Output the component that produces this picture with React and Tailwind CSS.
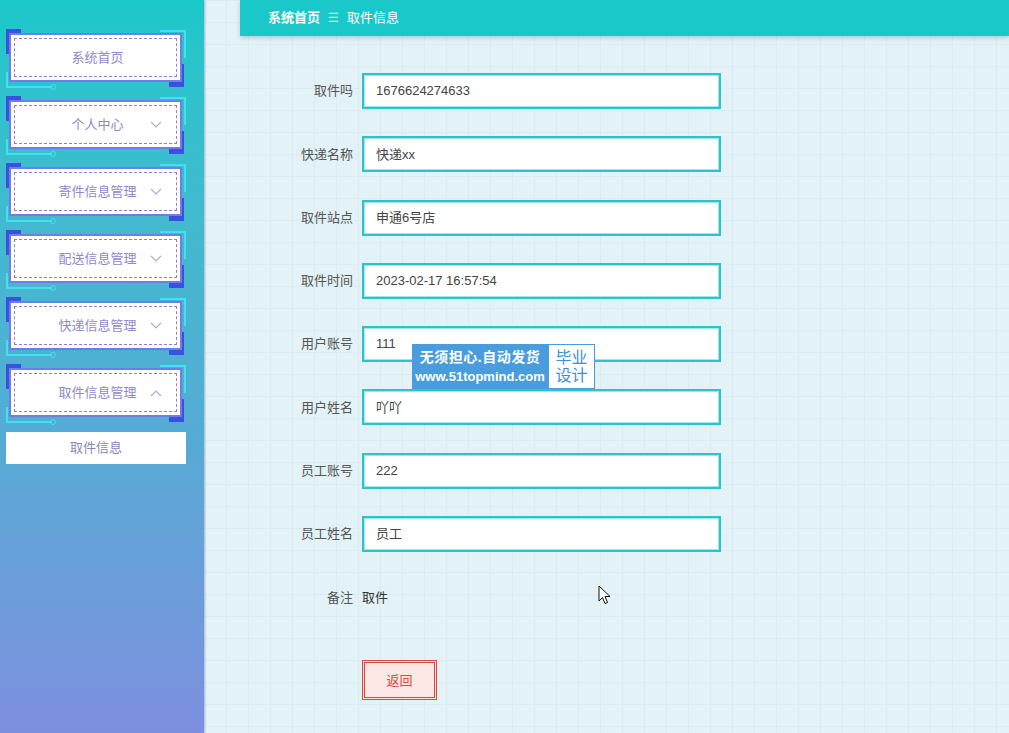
import React from "react";

const font = { fontFamily: '"Liberation Sans", "Noto Sans CJK SC", sans-serif' };

function Chevron({ up }) {
  return (
    <svg width="12" height="8" viewBox="0 0 12 8" className="absolute right-[14px] top-1/2 -translate-y-1/2">
      <path d={up ? "M1 7 L6 2 L11 7" : "M1 1 L6 6 L11 1"} fill="none" stroke="#b0aadb" strokeWidth="1.2" />
    </svg>
  );
}

function MenuItem({ label, arrow }) {
  return (
    <div className="relative h-[67px] pl-[9px] pt-[5px]">
      <div className="absolute left-[6px] top-[1px] w-[15px] h-[25px] bg-[#3b4fe0]" />
      <div className="absolute left-[169px] top-[36px] w-[15px] h-[23px] bg-[#3b4fe0]" />
      <div className="absolute left-[160px] top-[2px] w-[26px] h-[28px] border-t-2 border-r-2 border-[#3fe3f0]" />
      <div className="absolute left-[6px] top-[44px] w-[46px] h-[16px] border-l-2 border-b-2 border-[#3fe3f0]" />
      <div className="absolute left-[50px] top-[56px] w-[6px] h-[6px] rounded-full border border-[#3fe3f0]" />
      <div className="relative w-[173px] h-[49px] bg-white border-2 border-[#6f7ee6] p-[3px]">
        <div className="relative h-full border border-dashed border-[#8f7fcc] flex items-center justify-center">
          <span className="text-[13px] text-[#9088cc] ml-[4px]">{label}</span>
          {arrow && <Chevron up={arrow === "up"} />}
        </div>
      </div>
    </div>
  );
}

function Row({ label, value }) {
  return (
    <div className="flex items-center h-[36px]">
      <div className="w-[73px] text-right text-[13px] text-[#555]">{label}</div>
      <div className="ml-[9px] w-[359px] h-[36px] bg-white border-2 border-[#2cc4ca] shadow-[inset_0_0_0_1px_#9fe6ea] flex items-center pl-[12px] text-[13px] text-[#444]">
        {value}
      </div>
    </div>
  );
}

export default function App() {
  const rows = [
    ["取件吗", "1676624274633"],
    ["快递名称", "快递xx"],
    ["取件站点", "申通6号店"],
    ["取件时间", "2023-02-17 16:57:54"],
    ["用户账号", "111"],
    ["用户姓名", "吖吖"],
    ["员工账号", "222"],
    ["员工姓名", "员工"],
  ];
  return (
    <div style={font} className="relative flex w-[1009px] h-[733px] overflow-hidden">
      <div className="w-[204px] h-full shrink-0 bg-gradient-to-b from-[#1bc8c9] via-[#55abd5] via-60% to-[#7d8fdf] pt-[28px] shadow-[1px_0_2px_rgba(60,80,120,0.35)] z-10">
        <MenuItem label="系统首页" />
        <MenuItem label="个人中心" arrow="down" />
        <MenuItem label="寄件信息管理" arrow="down" />
        <MenuItem label="配送信息管理" arrow="down" />
        <MenuItem label="快递信息管理" arrow="down" />
        <MenuItem label="取件信息管理" arrow="up" />
        <div className="ml-[6px] mt-[2px] w-[180px] h-[32px] bg-white flex items-center justify-center text-[13px] text-[#8a86b8]">
          取件信息
        </div>
      </div>

      <div className="flex-1 h-full bg-[#e2f2f6] bg-[linear-gradient(to_right,#d8ecf1_1px,transparent_1px),linear-gradient(to_bottom,#d8ecf1_1px,transparent_1px)] bg-[size:22px_22px]">
        <div className="ml-[36px] h-[36px] bg-[#1bc8c9] shadow-[0_2px_4px_rgba(80,120,140,0.3)] flex items-center pl-[28px] text-[13px] text-white">
          <span className="font-bold">系统首页</span>
          <span className="mx-[8px] text-[#cdf3f4] text-[12px]">☰</span>
          <span>取件信息</span>
        </div>
        <div className="pl-[76px] pt-[37px] flex flex-col gap-[27.3px]">
          {rows.map(([l, v]) => (
            <Row key={l} label={l} value={v} />
          ))}
          <div className="flex items-center h-[36px]">
            <div className="w-[73px] text-right text-[13px] text-[#555]">备注</div>
            <div className="ml-[9px] text-[13px] text-[#333]">取件</div>
          </div>
        </div>
        <div className="pl-[158px] mt-[45px]">
          <button className="w-[75px] h-[40px] bg-[#fde8e6] border-[3px] border-double border-[#d8473e] text-[13px] text-[#d8473e]">
            返回
          </button>
        </div>
      </div>

      <div className="absolute left-[412px] top-[344px] w-[183px] h-[45px] flex bg-[#4a9ddc]">
        <div className="w-[136px] flex flex-col items-center justify-center leading-[19px]">
          <span className="text-[14px] font-bold text-white tracking-[0.5px]">无须担心.自动发货</span>
          <span className="text-[13px] font-bold text-white">www.51topmind.com</span>
        </div>
        <div className="flex-1 m-[1px] bg-white flex flex-col items-center justify-center leading-[18px] text-[16px] text-[#3e8fd4]">
          <span>毕业</span>
          <span>设计</span>
        </div>
      </div>

      <svg className="absolute left-[598px] top-[585px]" width="13" height="20" viewBox="0 0 13 20">
        <path d="M1 1 L1 16 L4.5 12.5 L7 18.5 L9.5 17.5 L7 11.5 L12 11.5 Z" fill="white" stroke="#111" strokeWidth="1" strokeLinejoin="round" />
      </svg>
    </div>
  );
}
